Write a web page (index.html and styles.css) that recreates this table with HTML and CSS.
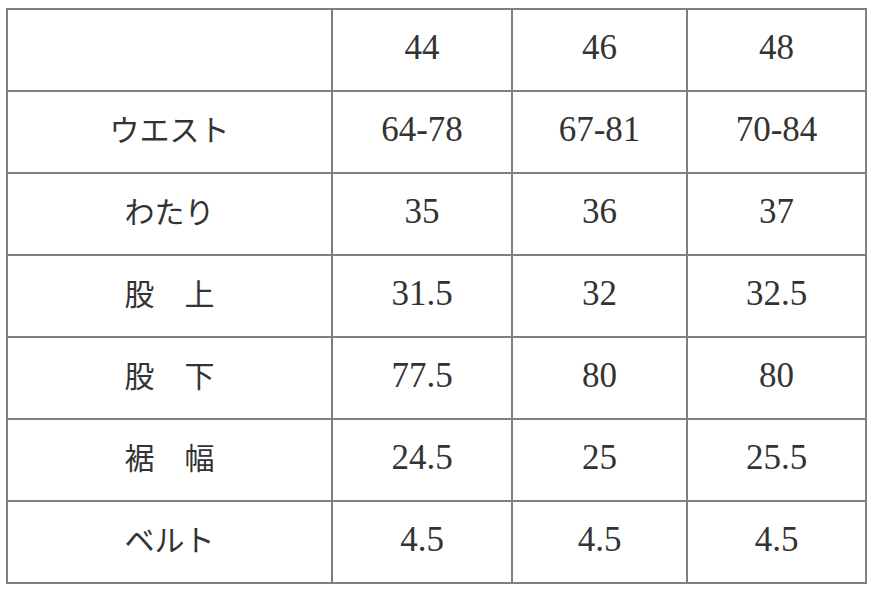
FILE: index.html
```html
<!DOCTYPE html>
<html lang="ja">
<head>
<meta charset="utf-8">
<title>サイズ表</title>
<link rel="stylesheet" href="styles.css">
</head>
<body>
<div class="wrap">
<table class="size-table">
  <colgroup>
    <col class="c1"><col class="c2"><col class="c3"><col class="c4">
  </colgroup>
  <tr><td></td><td>44</td><td>46</td><td>48</td></tr>
  <tr><td class="jp">ウエスト</td><td>64-78</td><td>67-81</td><td>70-84</td></tr>
  <tr><td class="jp">わたり</td><td>35</td><td>36</td><td>37</td></tr>
  <tr><td class="jp">股　上</td><td>31.5</td><td>32</td><td>32.5</td></tr>
  <tr><td class="jp">股　下</td><td>77.5</td><td>80</td><td>80</td></tr>
  <tr><td class="jp">裾　幅</td><td>24.5</td><td>25</td><td>25.5</td></tr>
  <tr><td class="jp">ベルト</td><td>4.5</td><td>4.5</td><td>4.5</td></tr>
</table>
</div>
</body>
</html>
```
FILE: styles.css
```css
html, body {
  margin: 0;
  padding: 0;
  background: #fff;
}
.wrap {
  padding: 8px 0 0 6px;
}
.size-table {
  border-collapse: collapse;
  table-layout: fixed;
  width: 861px;
  color: #333;
  font-family: "Liberation Serif", "Noto Sans CJK JP", serif;
  font-size: 35px;
}
.c1 { width: 325px; }
.c2 { width: 180px; }
.c3 { width: 175px; }
.c4 { width: 179px; }
.size-table td {
  border: 2px solid #808080;
  height: 80px;
  padding: 0 0 5px;
  text-align: center;
  vertical-align: middle;
  box-sizing: border-box;
  line-height: 1;
}
.size-table tr {
  height: 82px;
}
.size-table td.jp {
  font-family: "Noto Sans CJK JP", sans-serif;
  font-size: 30px;
  font-weight: 400;
  padding-bottom: 8px;
}
```
